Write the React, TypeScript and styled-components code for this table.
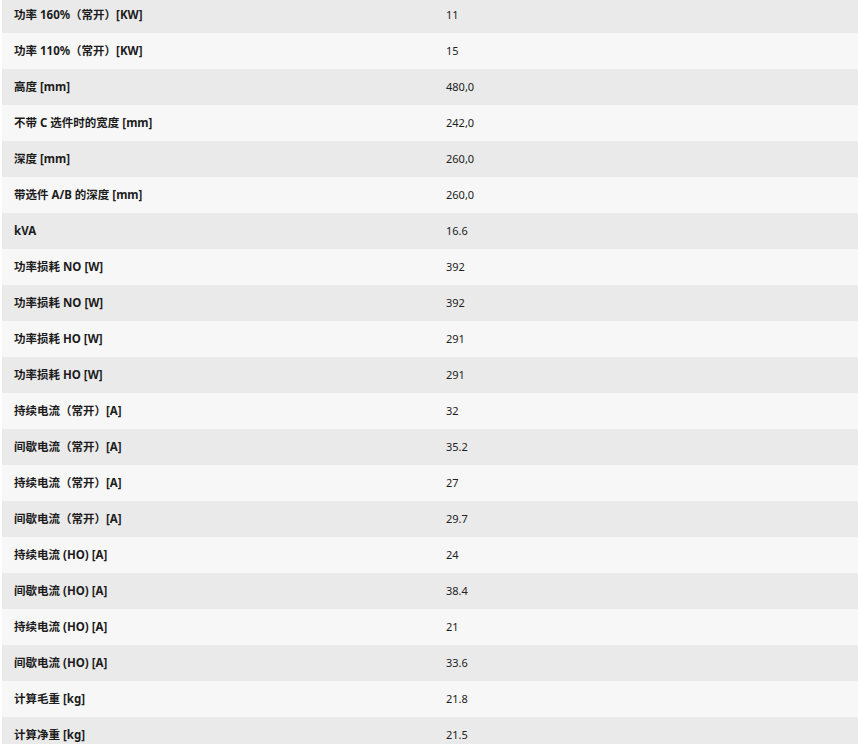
import React from "react";
import styled, { createGlobalStyle } from "styled-components";

const Global = createGlobalStyle`
  html, body { margin: 0; padding: 0; background: #ffffff; overflow: hidden; }
  body { font-family: "Noto Sans", "Noto Sans CJK SC", sans-serif; }
`;

const Page = styled.div`
  margin-top: -3px;
  padding-left: 2px;
`;

const Table = styled.div`
  display: flex;
  flex-direction: column;
  width: 856px;
`;

const Row = styled.div<{ $alt: boolean }>`
  display: grid;
  grid-template-columns: 1fr 1fr;
  box-sizing: border-box;
  height: 36px;
  padding-bottom: 2px;
  align-items: center;
  background: ${(p) => (p.$alt ? "#f7f7f7" : "#eaeaea")};
`;

const Label = styled.div`
  padding-left: 12px;
  font-size: 11.5px;
  font-weight: 700;
  color: #1c1c1c;
  white-space: nowrap;
`;

const Value = styled.div`
  padding-left: 16px;
  font-size: 11px;
  color: #222;
`;

const rows: [string, string][] = [
  ["功率 160%（常开）[KW]", "11"],
  ["功率 110%（常开）[KW]", "15"],
  ["高度 [mm]", "480,0"],
  ["不带 C 选件时的宽度 [mm]", "242,0"],
  ["深度 [mm]", "260,0"],
  ["带选件 A/B 的深度 [mm]", "260,0"],
  ["kVA", "16.6"],
  ["功率损耗 NO [W]", "392"],
  ["功率损耗 NO [W]", "392"],
  ["功率损耗 HO [W]", "291"],
  ["功率损耗 HO [W]", "291"],
  ["持续电流（常开）[A]", "32"],
  ["间歇电流（常开）[A]", "35.2"],
  ["持续电流（常开）[A]", "27"],
  ["间歇电流（常开）[A]", "29.7"],
  ["持续电流 (HO) [A]", "24"],
  ["间歇电流 (HO) [A]", "38.4"],
  ["持续电流 (HO) [A]", "21"],
  ["间歇电流 (HO) [A]", "33.6"],
  ["计算毛重 [kg]", "21.8"],
  ["计算净重 [kg]", "21.5"],
];

export default function App() {
  return (
    <>
      <Global />
      <Page>
        <Table>
          {rows.map(([l, v], i) => (
            <Row key={i} $alt={i % 2 === 1}>
              <Label>{l}</Label>
              <Value>{v}</Value>
            </Row>
          ))}
        </Table>
      </Page>
    </>
  );
}
